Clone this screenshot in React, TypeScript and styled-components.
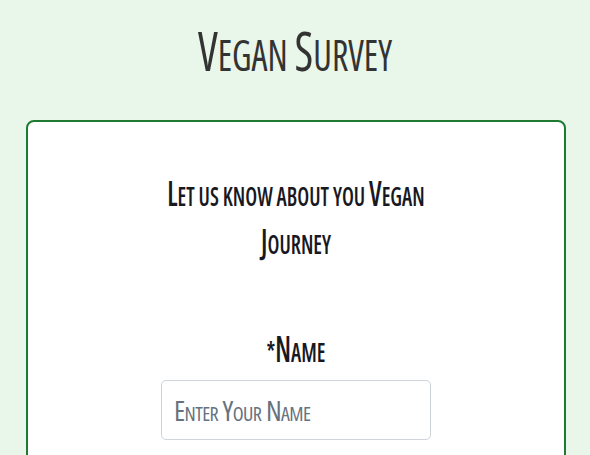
import React from "react";
import styled, { createGlobalStyle } from "styled-components";

const Global = createGlobalStyle`
  html, body { margin: 0; padding: 0; }
  body {
    background: #e8f7ea;
    font-family: "Open Sans", "Liberation Sans", sans-serif;
    font-stretch: 75%;
  }
`;

const Cap = styled.span`
  font-size: 1.27em;
  line-height: 1;
  vertical-align: baseline;
`;

function caps(text: string) {
  return text.split("").map((ch, i) =>
    ch >= "A" && ch <= "Z" ? <Cap key={i}>{ch}</Cap> : ch
  );
}

const Page = styled.div`
  display: flex;
  flex-direction: column;
  align-items: center;
  padding-top: 25px;
  height: 455px;
  box-sizing: border-box;
  overflow: hidden;
`;

const Title = styled.h1`
  margin: 0 0 35px;
  font-size: 36px;
  line-height: 60px;
  font-weight: 500;
  color: #333333;
  text-transform: uppercase;
  white-space: nowrap;
  transform: scaleY(1.2);
`;

const Card = styled.form`
  width: 540px;
  box-sizing: border-box;
  margin-left: 2px;
  background: #ffffff;
  border: 2px solid #1e7a33;
  border-radius: 8px;
  padding: 61px 20px 40px;
  display: flex;
  flex-direction: column;
  align-items: center;
  flex: 1;
`;

const Intro = styled.p`
  margin: 0;
  width: 290px;
  text-align: center;
  font-size: 21px;
  line-height: 37.5px;
  font-weight: 600;
  color: #18181f;
  text-transform: uppercase;
  transform: scaleY(1.28);
`;

const Field = styled.div`
  margin-top: 73px;
  display: flex;
  flex-direction: column;
  align-items: center;
`;

const Label = styled.label`
  font-size: 21px;
  line-height: 40px;
  font-weight: 600;
  color: #18181f;
  text-transform: uppercase;
  transform: scaleY(1.32);
  margin-bottom: 9px;
`;

const Input = styled.input`
  width: 270px;
  height: 60px;
  box-sizing: border-box;
  border: 1px solid #ced4da;
  border-radius: 5px;
  padding: 0 12px;
  font-family: "Open Sans", "Liberation Sans", sans-serif;
  font-stretch: 75%;
  font-variant: small-caps;
  font-size: 28px;
  letter-spacing: -0.6px;
  color: #495057;
  &::placeholder {
    color: #66727f;
  }
`;

export default function App() {
  return (
    <>
      <Global />
      <Page>
        <Title>{caps("Vegan Survey")}</Title>
        <Card onSubmit={(e) => e.preventDefault()}>
          <Intro>{caps("Let us know about you Vegan Journey")}</Intro>
          <Field>
            <Label htmlFor="name">{caps("*Name")}</Label>
            <Input id="name" placeholder="Enter Your Name" />
          </Field>
        </Card>
      </Page>
    </>
  );
}
